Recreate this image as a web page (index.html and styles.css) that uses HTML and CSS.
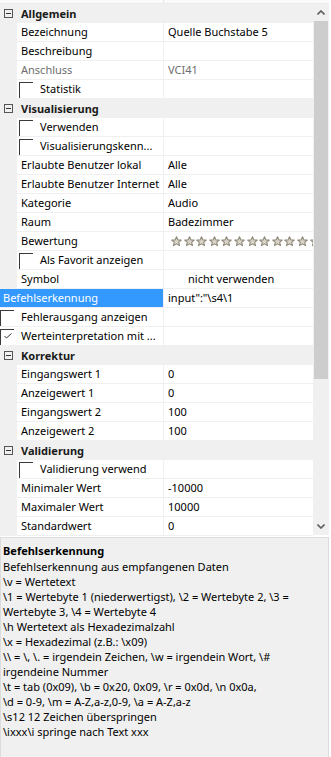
FILE: index.html
```html
<!DOCTYPE html>
<html lang="de">
<head>
    <meta charset="UTF-8">
    <meta name="viewport" content="width=device-width, initial-scale=1.0">
    <title>Eigenschaften | Befehlserkennung</title>
    <link rel="stylesheet" href="styles.css">
</head>
<body>
    <div class="property-panel">
        <div class="top-strip"><span class="top-split"></span></div>

        <div class="grid-area">
            <div class="grid-rows">
                <div class="category"><span class="toggle"></span><span class="category-name">Allgemein</span></div>
                <div class="row"><span class="gutter"></span><span class="name">Bezeichnung</span><span class="value">Quelle Buchstabe 5</span></div>
                <div class="row"><span class="gutter"></span><span class="name">Beschreibung</span><span class="value"></span></div>
                <div class="row disabled"><span class="gutter"></span><span class="name">Anschluss</span><span class="value">VCI41</span></div>
                <div class="row"><span class="gutter"></span><span class="name with-check"><span class="check"></span>Statistik</span><span class="value"></span></div>

                <div class="category"><span class="toggle"></span><span class="category-name">Visualisierung</span></div>
                <div class="row"><span class="gutter"></span><span class="name with-check"><span class="check"></span>Verwenden</span><span class="value"></span></div>
                <div class="row"><span class="gutter"></span><span class="name with-check"><span class="check"></span>Visualisierungskenn...</span><span class="value"></span></div>
                <div class="row"><span class="gutter"></span><span class="name">Erlaubte Benutzer lokal</span><span class="value">Alle</span></div>
                <div class="row"><span class="gutter"></span><span class="name">Erlaubte Benutzer Internet</span><span class="value">Alle</span></div>
                <div class="row"><span class="gutter"></span><span class="name">Kategorie</span><span class="value">Audio</span></div>
                <div class="row"><span class="gutter"></span><span class="name">Raum</span><span class="value">Badezimmer</span></div>
                <div class="row"><span class="gutter"></span><span class="name">Bewertung</span>
                    <span class="value stars">
                        <svg class="star" viewBox="0 0 12 12"><path d="M6 .8l1.5 3.4 3.7.3-2.8 2.4.9 3.6L6 8.6 2.7 10.5l.9-3.6L.8 4.5l3.7-.3z"/></svg>
                        <svg class="star" viewBox="0 0 12 12"><path d="M6 .8l1.5 3.4 3.7.3-2.8 2.4.9 3.6L6 8.6 2.7 10.5l.9-3.6L.8 4.5l3.7-.3z"/></svg>
                        <svg class="star" viewBox="0 0 12 12"><path d="M6 .8l1.5 3.4 3.7.3-2.8 2.4.9 3.6L6 8.6 2.7 10.5l.9-3.6L.8 4.5l3.7-.3z"/></svg>
                        <svg class="star" viewBox="0 0 12 12"><path d="M6 .8l1.5 3.4 3.7.3-2.8 2.4.9 3.6L6 8.6 2.7 10.5l.9-3.6L.8 4.5l3.7-.3z"/></svg>
                        <svg class="star" viewBox="0 0 12 12"><path d="M6 .8l1.5 3.4 3.7.3-2.8 2.4.9 3.6L6 8.6 2.7 10.5l.9-3.6L.8 4.5l3.7-.3z"/></svg>
                        <svg class="star" viewBox="0 0 12 12"><path d="M6 .8l1.5 3.4 3.7.3-2.8 2.4.9 3.6L6 8.6 2.7 10.5l.9-3.6L.8 4.5l3.7-.3z"/></svg>
                        <svg class="star" viewBox="0 0 12 12"><path d="M6 .8l1.5 3.4 3.7.3-2.8 2.4.9 3.6L6 8.6 2.7 10.5l.9-3.6L.8 4.5l3.7-.3z"/></svg>
                        <svg class="star" viewBox="0 0 12 12"><path d="M6 .8l1.5 3.4 3.7.3-2.8 2.4.9 3.6L6 8.6 2.7 10.5l.9-3.6L.8 4.5l3.7-.3z"/></svg>
                        <svg class="star" viewBox="0 0 12 12"><path d="M6 .8l1.5 3.4 3.7.3-2.8 2.4.9 3.6L6 8.6 2.7 10.5l.9-3.6L.8 4.5l3.7-.3z"/></svg>
                        <svg class="star" viewBox="0 0 12 12"><path d="M6 .8l1.5 3.4 3.7.3-2.8 2.4.9 3.6L6 8.6 2.7 10.5l.9-3.6L.8 4.5l3.7-.3z"/></svg>
                        <svg class="star" viewBox="0 0 12 12"><path d="M6 .8l1.5 3.4 3.7.3-2.8 2.4.9 3.6L6 8.6 2.7 10.5l.9-3.6L.8 4.5l3.7-.3z"/></svg>
                        <svg class="star" viewBox="0 0 12 12"><path d="M6 .8l1.5 3.4 3.7.3-2.8 2.4.9 3.6L6 8.6 2.7 10.5l.9-3.6L.8 4.5l3.7-.3z"/></svg>
                    </span>
                </div>
                <div class="row"><span class="gutter"></span><span class="name with-check"><span class="check"></span>Als Favorit anzeigen</span><span class="value"></span></div>
                <div class="row"><span class="gutter"></span><span class="name">Symbol</span><span class="value centered">nicht verwenden</span></div>

                <div class="row root selected"><span class="name">Befehlserkennung</span><span class="value">input":"\s4\1</span></div>
                <div class="row root"><span class="name with-check"><span class="check"></span>Fehlerausgang anzeigen</span><span class="value"></span></div>
                <div class="row root"><span class="name with-check"><span class="check"><svg class="tick" viewBox="0 0 8 6"><path d="M.5 3l2 2 5-4.5"/></svg></span>Werteinterpretation mit ...</span><span class="value"></span></div>

                <div class="category"><span class="toggle"></span><span class="category-name">Korrektur</span></div>
                <div class="row"><span class="gutter"></span><span class="name">Eingangswert 1</span><span class="value">0</span></div>
                <div class="row"><span class="gutter"></span><span class="name">Anzeigewert 1</span><span class="value">0</span></div>
                <div class="row"><span class="gutter"></span><span class="name">Eingangswert 2</span><span class="value">100</span></div>
                <div class="row"><span class="gutter"></span><span class="name">Anzeigewert 2</span><span class="value">100</span></div>

                <div class="category"><span class="toggle"></span><span class="category-name">Validierung</span></div>
                <div class="row"><span class="gutter"></span><span class="name with-check"><span class="check"></span>Validierung verwend</span><span class="value"></span></div>
                <div class="row"><span class="gutter"></span><span class="name">Minimaler Wert</span><span class="value">-10000</span></div>
                <div class="row"><span class="gutter"></span><span class="name">Maximaler Wert</span><span class="value">10000</span></div>
                <div class="row"><span class="gutter"></span><span class="name">Standardwert</span><span class="value">0</span></div>
            </div>

            <div class="scrollbar">
                <div class="scroll-btn">
                    <svg viewBox="0 0 8 5"><path d="M.5 4.5L4 1l3.5 3.5"/></svg>
                </div>
                <div class="scroll-thumb"></div>
                <div class="scroll-track"></div>
                <div class="scroll-btn">
                    <svg viewBox="0 0 8 5"><path d="M.5.5L4 4 7.5.5"/></svg>
                </div>
            </div>
        </div>

        <!-- Beschreibung der gewählten Eigenschaft -->
        <div class="help-pane">
            <div class="help-title">Befehlserkennung</div>
            <div class="help-text">
                Befehlserkennung aus empfangenen Daten<br>
                \v = Wertetext<br>
                \1 = Wertebyte 1 (niederwertigst), \2 = Wertebyte 2, \3 =<br>
                Wertebyte 3, \4 = Wertebyte 4<br>
                \h Wertetext als Hexadezimalzahl<br>
                \x = Hexadezimal (z.B.: \x09)<br>
                \\ = \, \. = irgendein Zeichen, \w = irgendein Wort, \#<br>
                irgendeine Nummer<br>
                \t = tab (0x09), \b = 0x20, 0x09, \r = 0x0d, \n 0x0a,<br>
                \d = 0-9, \m = A-Z,a-z,0-9, \a = A-Z,a-z<br>
                \s12 12 Zeichen überspringen<br>
                \ixxx\i springe nach Text xxx
            </div>
        </div>
    </div>
</body>
</html>
```

FILE: styles.css
```css
* {
    margin: 0;
    padding: 0;
    box-sizing: border-box;
}

body {
    font-family: 'Noto Sans', 'Open Sans', sans-serif;
    font-size: 11px;
    color: #000;
    background: #fff;
    height: 757px;
    overflow: hidden;
}

.property-panel {
    width: 329px;
}

.top-strip {
    height: 4px;
    border-bottom: 1px solid #ececec;
    background: #fafafa;
    padding-left: 163px;
}

.top-split {
    display: block;
    width: 1px;
    height: 3px;
    background: #e6e6e6;
}

.grid-area {
    display: flex;
    height: 531px;
}

.grid-rows {
    width: 313px;
    background: #f0f0f0;
}

/* categories */
.category {
    height: 19px;
    display: flex;
    align-items: center;
    background: #f0f0f0;
}

.toggle {
    position: relative;
    width: 9px;
    height: 9px;
    margin: 0 8px 0 4px;
    border: 1px solid #555;
}

.toggle::after {
    content: '';
    position: absolute;
    left: 1px;
    top: 3px;
    width: 5px;
    height: 1px;
    background: #333;
}

.category-name {
    font-weight: 700;
    color: #1a1a1a;
}

/* property rows */
.row {
    display: grid;
    grid-template-columns: 17px 146px 150px;
    height: 19px;
    border-bottom: 1px solid #f0f0f0;
}

.row.root {
    grid-template-columns: 163px 150px;
}

.gutter {
    background: #f0f0f0;
}

.name {
    display: flex;
    align-items: center;
    padding-left: 4px;
    background: #fff;
    white-space: nowrap;
    overflow: hidden;
    line-height: 18px;
}

.name.with-check {
    padding-left: 2px;
}

.root .name {
    padding-left: 3px;
}

.root .name.with-check {
    padding-left: 0;
}

.check {
    align-self: flex-end;
    flex-shrink: 0;
    width: 14px;
    height: 16px;
    margin-right: 7px;
    border-top: 1px solid #3a3a3a;
    border-left: 1px solid #3a3a3a;
    padding: 3px 0 0 3px;
}

.tick {
    display: block;
    width: 8px;
    height: 6px;
    fill: none;
    stroke: #333;
    stroke-width: 1;
}

.value {
    display: flex;
    align-items: center;
    padding-left: 4px;
    background: #fff;
    border-left: 1px solid #f0f0f0;
    white-space: nowrap;
    overflow: hidden;
    line-height: 18px;
}

.value.centered {
    padding-left: 24px;
}

.disabled .name,
.disabled .value {
    color: #6d6d6d;
}

.selected .name {
    background: #3399ff;
    color: #fff;
}

.stars {
    padding-left: 7px;
    gap: 1.6px;
}

.star {
    flex-shrink: 0;
    width: 11px;
    height: 11px;
    fill: #d9d5c9;
    stroke: #8f8a7b;
    stroke-width: 1.2;
    stroke-linejoin: round;
}

/* scrollbar */
.scrollbar {
    width: 16px;
    background: #f0f0f0;
    display: flex;
    flex-direction: column;
}

.scroll-btn {
    height: 17px;
    display: flex;
    align-items: center;
    justify-content: center;
}

.scroll-btn svg {
    width: 8px;
    height: 5px;
    fill: none;
    stroke: #606060;
    stroke-width: 1.6;
}

.scroll-thumb {
    height: 358px;
    margin: 0 1px;
    background: #cdcdcd;
}

.scroll-track {
    flex: 1;
}

/* description */
.help-pane {
    margin-top: 2px;
    height: 222px;
    border: 1px solid #dcdcdc;
    border-bottom: none;
    background: #f0f0f0;
    padding: 5px 2px;
    color: #000;
}

.help-title {
    font-weight: 700;
    line-height: 16px;
}

.help-text {
    line-height: 15px;
    white-space: nowrap;
}
```
